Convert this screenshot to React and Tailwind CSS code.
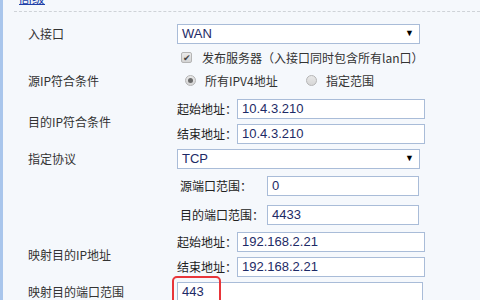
import React from "react";

const inputCls =
  "h-[20px] border border-[#a9bcd8] bg-white pl-[4px] font-['Liberation_Sans',Arial,sans-serif] text-[13px] leading-[18px] text-[#1d2a66]";

function Select({ value }) {
  return (
    <div className="flex h-[20px] w-[243px] items-center justify-between border border-[#a9bcd8] bg-white pl-[4px] pr-[5px] font-['Liberation_Sans',Arial,sans-serif] text-[13px] text-[#1d2a66]">
      <span>{value}</span>
      <span className="text-[9px] text-black">▼</span>
    </div>
  );
}

function Radio({ checked }) {
  return (
    <span className="flex h-[11px] w-[11px] items-center justify-center rounded-full border border-[#b5b5b5] bg-gradient-to-b from-[#e8e8e8] to-[#d6d6d6]">
      {checked && <span className="h-[5px] w-[5px] rounded-full bg-[#6b6b6b]" />}
    </span>
  );
}

function SubRow({ label, value, indent, labelW, inputW, className }) {
  return (
    <div className={"flex items-center " + (className || "")}>
      <span className={"text-[#222] " + indent + " " + labelW}>{label}</span>
      <div className={inputCls + " " + inputW}>{value}</div>
    </div>
  );
}

export default function App() {
  return (
    <div className="relative h-[300px] w-[480px] overflow-hidden border-l-[3px] border-[#a9c6ec] bg-[#f5f8fc] font-['Noto_Sans_CJK_SC',sans-serif] text-[12px] text-[#333]">
      <div className="ml-[16px] h-[6px] overflow-hidden">
        <div className="-mt-[10px] text-[13px] leading-[16px] text-[#2040a8] underline">高级</div>
      </div>
      <div className="ml-[11px] mt-[5px] border-t border-dashed border-[#cfd3d8]" />

      <div className="mt-[12px] flex h-[20px] items-center pl-[25px]">
        <span className="w-[149px]">入接口</span>
        <Select value="WAN" />
      </div>

      <div className="mt-[4px] flex h-[19px] items-center pl-[178px]">
        <span className="flex h-[11px] w-[11px] items-center justify-center rounded-[2px] border border-[#b5b5b5] bg-gradient-to-b from-[#eaeaea] to-[#d4d4d4] text-[9px] leading-none text-[#444]">
          ✔
        </span>
        <span className="ml-[10px]">发布服务器（入接口同时包含所有lan口）</span>
      </div>

      <div className="mt-[4px] flex h-[19px] items-center pl-[25px]">
        <span className="w-[157px]">源IP符合条件</span>
        <Radio checked />
        <span className="ml-[9px] w-[101px]">所有IPV4地址</span>
        <Radio />
        <span className="ml-[9px]">指定范围</span>
      </div>

      <div className="mt-[9px] flex items-center pl-[25px]">
        <span className="w-[149px]">目的IP符合条件</span>
        <div className="flex flex-col gap-[5px]">
          <SubRow label="起始地址：" value="10.4.3.210" indent="" labelW="w-[60px]" inputW="w-[188px]" />
          <SubRow label="结束地址：" value="10.4.3.210" indent="" labelW="w-[60px]" inputW="w-[188px]" />
        </div>
      </div>

      <div className="mt-[5px] flex h-[20px] items-center pl-[25px]">
        <span className="w-[149px]">指定协议</span>
        <Select value="TCP" />
      </div>

      <div className="pl-[174px]">
        <SubRow className="mt-[7px]" label="源端口范围：" value="0" indent="ml-[3px]" labelW="w-[87px]" inputW="w-[152px]" />
        <SubRow className="mt-[9px]" label="目的端口范围：" value="4433" indent="ml-[3px]" labelW="w-[87px]" inputW="w-[152px]" />
      </div>

      <div className="mt-[7px] flex items-center pl-[25px]">
        <span className="w-[149px]">映射目的IP地址</span>
        <div className="flex flex-col gap-[5px]">
          <SubRow label="起始地址：" value="192.168.2.21" indent="" labelW="w-[60px]" inputW="w-[188px]" />
          <SubRow label="结束地址：" value="192.168.2.21" indent="" labelW="w-[60px]" inputW="w-[188px]" />
        </div>
      </div>

      <div className="mt-[5px] flex items-center pl-[25px]">
        <span className="w-[149px]">映射目的端口范围</span>
        <div className={inputCls + " w-[246px]"}>443</div>
      </div>

      <div className="absolute left-[169px] top-[276px] h-[40px] w-[49px] rounded-[5px] border-2 border-[#e8353a]" />
    </div>
  );
}
